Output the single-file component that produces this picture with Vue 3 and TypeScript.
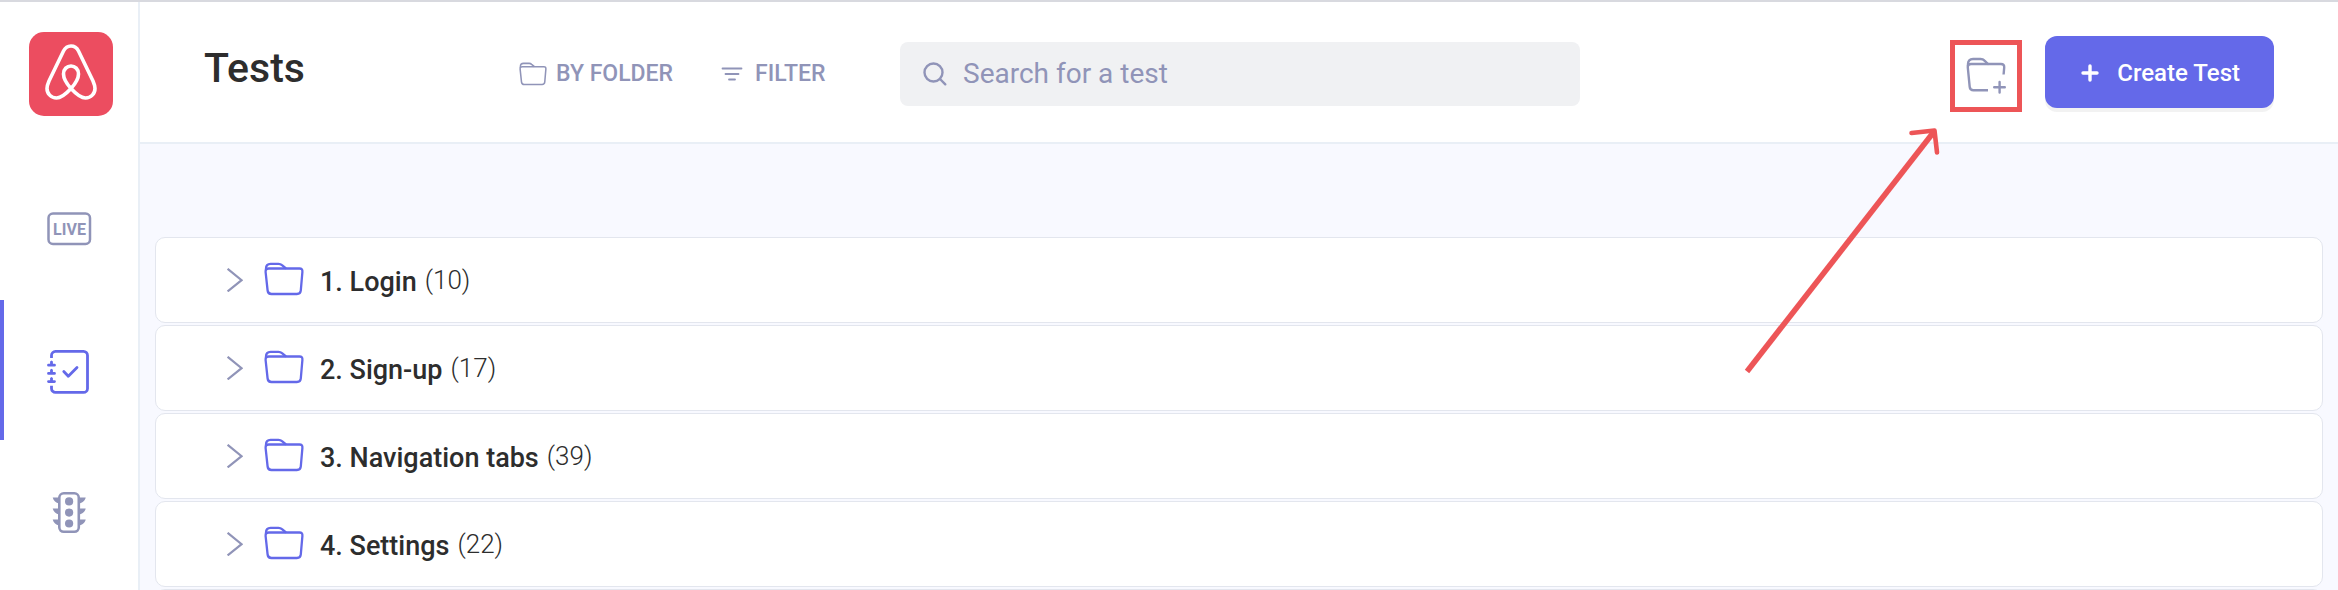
<script setup lang="ts">
import { ref } from 'vue'

interface Folder {
  id: number
  name: string
  count: number
}

const folders: Folder[] = [
  { id: 1, name: '1. Login', count: 10 },
  { id: 2, name: '2. Sign-up', count: 17 },
  { id: 3, name: '3. Navigation tabs', count: 39 },
  { id: 4, name: '4. Settings', count: 22 },
]

const query = ref('')
</script>

<template>
  <div class="app">
    <nav class="sidebar" aria-label="Main">
      <a class="logo" href="#" aria-label="Home">
        <svg viewBox="0 0 84 84" fill="none" stroke="#fff" stroke-width="3.6" stroke-linejoin="round">
          <path d="M42 56.5C37 51 34.5 46.500 34.500 42C34.500 37 38 34 42 34C46 34 49.500 37 49.500 42C49.500 46.500 47 51 42 56.500C36 63 31.500 66 27.500 66C22 66 18 61.500 18 56.500C18 54 18.700 52 20 49L34.500 19C36.500 15 39 14 42 14C45 14 47.500 15 49.500 19L64 49C65.300 52 66 54 66 56.500C66 61.500 62 66 56.500 66C52.500 66 48 63 42 56.500Z" />
        </svg>
      </a>
      <a class="nav-item" href="#live" aria-label="Live">
        <svg viewBox="0 0 48 48">
          <rect x="3.500" y="7.500" width="41.500" height="30.500" rx="4.500" fill="none" stroke="currentColor" stroke-width="2.500" />
          <text x="24.500" y="28.500" text-anchor="middle" class="live-text">LIVE</text>
        </svg>
      </a>
      <a class="nav-item active" href="#tests" aria-label="Tests" aria-current="page">
        <svg viewBox="0 0 48 48" fill="none" stroke="currentColor" stroke-width="2.800">
          <path d="M6.500 12V9.500A4 4 0 0 1 10.500 5.400H38.500A4 4 0 0 1 42.500 9.400V42.400A4 4 0 0 1 38.500 46.400H10.500A4 4 0 0 1 6.500 42.400V39.800" />
          <path d="M18.800 25.500L23.300 30.300L32 21.500" stroke-linecap="round" stroke-linejoin="round" />
          <g fill="currentColor" stroke="none">
            <path d="M5.100 15.500L6.500 14.500L7.900 15.500V17.800H9.500A1.400 1.400 0 0 1 9.500 20.600H3.500A1.400 1.400 0 0 1 3.500 17.800H5.100Z" />
            <path d="M5.100 23.700L6.500 22.700L7.900 23.700V26H9.500A1.400 1.400 0 0 1 9.500 28.800H3.500A1.400 1.400 0 0 1 3.500 26H5.100Z" />
            <path d="M5.100 31.900L6.500 30.900L7.900 31.900V34.200H9.500A1.400 1.400 0 0 1 9.500 37H3.500A1.400 1.400 0 0 1 3.500 34.200H5.100Z" />
          </g>
        </svg>
      </a>
      <a class="nav-item" href="#results" aria-label="Results">
        <svg viewBox="0 0 48 48" fill="currentColor">
          <rect x="14.300" y="7.300" width="19.500" height="38.500" rx="4.500" fill="none" stroke="currentColor" stroke-width="2.600" />
          <circle cx="24.100" cy="15.400" r="4.100" />
          <circle cx="24.100" cy="26.600" r="4.100" />
          <circle cx="24.100" cy="37.500" r="4.100" />
          <path d="M7.700 11.400H14V17.400C11 17 8.500 14.500 7.700 11.400ZM7.700 22.400H14V28.400C11 28 8.500 25.500 7.700 22.400ZM7.700 33.400H14V39.400C11 39 8.500 36.500 7.700 33.400Z" />
          <path d="M40.700 11.400H34V17.400C37.300 17 40 14.500 40.700 11.400ZM40.700 22.400H34V28.400C37.300 28 40 25.500 40.700 22.400ZM40.700 33.400H34V39.400C37.300 39 40 36.500 40.700 33.400Z" />
        </svg>
      </a>
    </nav>

    <main class="main">
      <header class="header">
        <h1 class="title">Tests</h1>
        <div class="tools">
          <button class="tool" type="button">
            <svg class="folder-small" viewBox="0 0 40 34" fill="none" stroke="currentColor" stroke-width="2.200" stroke-linejoin="round">
              <path d="M4.800 6.500H35.500Q38.700 6.500 38.400 9.800L36.800 28.500Q36.500 32 33 32H7.500Q4 32 3.600 28.500L1.600 10Q1.300 6.500 4.800 6.500Z" />
              <path d="M2 8V6.500Q2 1.800 6.500 1.800H14.500Q16.500 1.800 18 3.200L22 6.500" />
            </svg>
            BY FOLDER
          </button>
          <button class="tool" type="button">
            <svg class="filter-icon" viewBox="0 0 22 16" fill="none" stroke="currentColor" stroke-width="1.800" stroke-linecap="round">
              <path d="M1.500 2.500H20.500M4.500 8H17.500M8 13.500H14" />
            </svg>
            FILTER
          </button>
        </div>
        <label class="search">
          <svg viewBox="0 0 26 26" fill="none" stroke="currentColor" stroke-width="2.400" stroke-linecap="round">
            <circle cx="11.500" cy="11.500" r="9" />
            <path d="M18 18L23.300 23.300" />
          </svg>
          <input v-model="query" type="text" placeholder="Search for a test" aria-label="Search for a test" />
        </label>
        <div class="actions">
          <div class="highlight">
            <button class="add-folder" type="button" aria-label="New folder">
              <svg viewBox="0 0 40 38" fill="none" stroke="currentColor" stroke-width="2.400" stroke-linecap="round" stroke-linejoin="round">
                <path d="M22 33.200H7.500Q4 33.200 3.700 29.800L1.800 10.500Q1.500 7 5 7H35Q38.500 7 38.200 10.500L37.600 17.500" stroke-linecap="butt" />
                <path d="M2 9V7Q2 2 7 2H14.500Q17 2 18.500 3.600L22 7" />
                <path d="M33.600 25V35.500M28.200 30.200H38.800" />
              </svg>
            </button>
            <svg class="arrow" viewBox="0 0 204 256" fill="none" stroke="#ed5557" aria-hidden="true">
              <path d="M8 251.500L195.500 11" stroke-width="5.600" />
              <path d="M172.500 13L195.500 10.500L198 32.500" stroke-width="4.600" stroke-linecap="round" stroke-linejoin="round" />
            </svg>
          </div>
          <button class="create" type="button">
            <svg viewBox="0 0 18 18" fill="none" stroke="currentColor" stroke-width="3.400" stroke-linecap="round">
              <path d="M9 2V16M2 9H16" />
            </svg>
            Create Test
          </button>
        </div>
      </header>

      <ul class="list">
        <li v-for="folder in folders" :key="folder.id" class="card">
          <button class="row" type="button" aria-expanded="false">
            <svg class="chevron" viewBox="0 0 16 24" fill="none" stroke="#9094b8" stroke-width="2.200">
              <path d="M.6 .8L14.600 12.200L.6 23.400" />
            </svg>
            <svg class="folder" viewBox="0 0 40 34" fill="none" stroke="#6469e9" stroke-width="2.300" stroke-linejoin="round">
              <path d="M4.800 6.500H35.500Q38.700 6.500 38.400 9.800L36.800 28.500Q36.500 32 33 32H7.500Q4 32 3.600 28.500L1.600 10Q1.300 6.500 4.800 6.500Z" />
              <path d="M2 8V6.500Q2 1.800 6.500 1.800H14.500Q16.500 1.800 18 3.200L22 6.500" />
            </svg>
            <span class="name">{{ folder.name }}</span>
            <span class="count">({{ folder.count }})</span>
          </button>
        </li>
        <li class="card" aria-hidden="true"></li>
      </ul>
    </main>
  </div>
</template>

<style>
body {
  margin: 0;
}
</style>

<style scoped>
.app {
  box-sizing: border-box;
  display: flex;
  height: 100vh;
  overflow: hidden;
  border-top: 2px solid #d8d9df;
  background: #fff;
  color: #2d2d2d;
  font-family: Roboto, "Open Sans", sans-serif;
}
button {
  margin: 0;
  padding: 0;
  border: 0;
  background: none;
  color: inherit;
  font: inherit;
  cursor: pointer;
}
svg {
  display: block;
  flex: none;
}
.sidebar {
  flex: none;
  display: flex;
  flex-direction: column;
  width: 138px;
  border-right: 2px solid #e9eff6;
}
.logo {
  flex: none;
  width: 84px;
  height: 84px;
  margin: 30px 25px 44px 29px;
  border-radius: 15px;
  background: #ec4d60;
}
.nav-item {
  box-sizing: border-box;
  display: flex;
  align-items: center;
  flex: none;
  height: 140px;
  padding-left: 41px;
  border-left: 4px solid transparent;
  color: #9094b8;
}
.nav-item svg {
  width: 48px;
  height: 48px;
}
.nav-item.active {
  border-left-color: #6469e9;
  color: #6469e9;
}
.live-text {
  fill: currentColor;
  font-size: 16px;
  font-weight: 700;
}
.main {
  flex: 1;
  min-width: 0;
  background: #f8f9ff;
}
.header {
  display: flex;
  align-items: center;
  height: 140px;
  padding: 0 64px;
  border-bottom: 2px solid #e9eff6;
  background: #fff;
}
.title {
  flex: none;
  width: 315px;
  margin: 0;
  padding-bottom: 8px;
  font-size: 41px;
  line-height: 48px;
  font-weight: 500;
}
.tools {
  flex: none;
  display: flex;
  gap: 48px;
  width: 381px;
  padding-top: 4px;
}
.tool {
  display: flex;
  align-items: center;
  gap: 9px;
  color: #9094b8;
  font-size: 23px;
  line-height: 28px;
  font-weight: 500;
}
.folder-small {
  width: 28px;
  height: 24px;
}
.filter-icon {
  width: 22px;
  height: 16px;
}
.tool .filter-icon {
  margin-right: 3px;
}
.search {
  box-sizing: border-box;
  display: flex;
  align-items: center;
  flex: 0 1 680px;
  min-width: 0;
  height: 64px;
  margin-top: 4px;
  padding: 0 22px;
  gap: 15px;
  border-radius: 8px;
  background: #f0f1f3;
  color: #9094b8;
}
.search svg {
  width: 26px;
  height: 26px;
}
.search input {
  flex: 1;
  min-width: 0;
  padding: 0;
  border: 0;
  outline: 0;
  background: none;
  color: #2d2d2d;
  font: 400 28px/36px Roboto, "Open Sans", sans-serif;
}
.search input::placeholder {
  color: #9094b8;
  opacity: 1;
}
.actions {
  flex: none;
  display: flex;
  align-items: center;
  gap: 23px;
  margin-left: auto;
}
.highlight {
  position: relative;
  margin-top: 8px;
  border: 5px solid #ed5557;
}
.add-folder {
  display: flex;
  align-items: center;
  justify-content: center;
  width: 62px;
  height: 62px;
  color: #9094b8;
}
.add-folder svg {
  width: 40px;
  height: 38px;
}
.arrow {
  position: absolute;
  z-index: 1;
  top: 75px;
  right: 74px;
  width: 204px;
  height: 256px;
  pointer-events: none;
}
.create {
  box-sizing: border-box;
  display: flex;
  align-items: center;
  height: 72px;
  padding: 2px 34px 0 36px;
  gap: 18px;
  border-radius: 12px;
  background: #6469e9;
  box-shadow: 0 4px 0 #f2f2f2;
  color: #fff;
  font-size: 24px;
  font-weight: 500;
}
.create svg {
  width: 18px;
  height: 18px;
}
.list {
  display: flex;
  flex-direction: column;
  gap: 2px;
  margin: 0;
  padding: 93px 15px 0;
  list-style: none;
}
.card {
  box-sizing: border-box;
  height: 86px;
  border: 1px solid #e3e6ee;
  border-radius: 10px;
  background: #fff;
}
.row {
  display: flex;
  align-items: center;
  width: 100%;
  height: 100%;
  padding-left: 71px;
  font-size: 27px;
  line-height: 34px;
}
.chevron {
  width: 16px;
  height: 24px;
}
.folder {
  width: 40px;
  height: 34px;
  margin: 0 16px 2px 21px;
}
.name {
  padding-top: 4px;
  font-weight: 500;
}
.count {
  margin-left: 8px;
  font-size: 26px;
  font-weight: 300;
}
</style>
